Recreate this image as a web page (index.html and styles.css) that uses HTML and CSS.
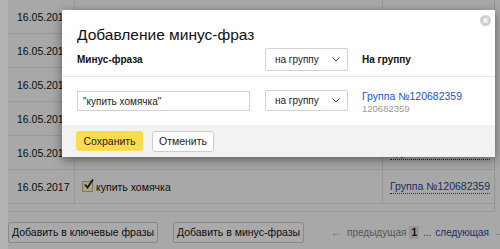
FILE: index.html
```html
<!DOCTYPE html>
<html lang="ru">
<head>
<meta charset="utf-8">
<link rel="stylesheet" href="styles.css">
</head>
<body>
<div class="page">
  <div class="table">
    <div class="row"><div class="c c-date">16.05.2017</div><div class="c c-phrase"></div><div class="c c-group"></div></div>
    <div class="row"><div class="c c-date">16.05.2017</div><div class="c c-phrase"></div><div class="c c-group"></div></div>
    <div class="row"><div class="c c-date">16.05.2017</div><div class="c c-phrase"></div><div class="c c-group"></div></div>
    <div class="row"><div class="c c-date">16.05.2017</div><div class="c c-phrase"></div><div class="c c-group"></div></div>
    <div class="row"><div class="c c-date">16.05.2017</div><div class="c c-phrase"></div><div class="c c-group"><a class="dlink">Группа №120682359</a></div></div>
    <div class="row"><div class="c c-date">16.05.2017</div><div class="c c-phrase"><span class="cb"><svg width="11" height="11" viewBox="0 0 11 11"><path d="M2 5.5 L4.5 8.5 L10 0.5" fill="none" stroke="#222" stroke-width="1.8"/></svg></span>купить хомячка</div><div class="c c-group"><a class="dlink">Группа №120682359</a></div></div>
    <div class="row row-empty"></div>
  </div>
  <div class="actions">
    <button class="btn">Добавить в ключевые фразы</button>
    <button class="btn btn-minus">Добавить в минус-фразы</button>
    <div class="pager">
      <span class="pg-muted">←</span>
      <span class="pg-muted">предыдущая</span>
      <span class="pg-cur">1</span>
      <span class="pg-dots">...</span>
      <a class="pg-next">следующая</a>
      <span class="pg-arrow">→</span>
    </div>
  </div>
</div>
<div class="overlay"></div>
<div class="modal">
  <span class="close"><svg width="11" height="11" viewBox="0 0 11 11"><circle cx="5.5" cy="5.5" r="5.5" fill="#d0d0d0"/><path d="M3.5 3.5 L7.5 7.5 M7.5 3.5 L3.5 7.5" stroke="#fff" stroke-width="1.4"/></svg></span>
  <div class="m-title">Добавление минус-фраз</div>
  <div class="m-row m-head">
    <div class="col1 lbl">Минус-фраза</div>
    <div class="col2"><div class="sel">на группу<svg class="chev" width="8" height="5" viewBox="0 0 8 5"><path d="M0.5 0.5 L4 4 L7.5 0.5" fill="none" stroke="#444" stroke-width="1"/></svg></div></div>
    <div class="col3 lbl">На группу</div>
  </div>
  <div class="m-row m-item">
    <div class="col1"><div class="inp">"купить хомячка"</div></div>
    <div class="col2"><div class="sel">на группу<svg class="chev" width="8" height="5" viewBox="0 0 8 5"><path d="M0.5 0.5 L4 4 L7.5 0.5" fill="none" stroke="#444" stroke-width="1"/></svg></div></div>
    <div class="col3 grp"><a class="glink">Группа №120682359</a><span class="gid">120682359</span></div>
  </div>
  <div class="m-foot">
    <button class="b-save">Сохранить</button>
    <button class="b-cancel">Отменить</button>
  </div>
</div>
</body>
</html>
```
FILE: styles.css
```css
html, body {
  margin: 0;
  padding: 0;
}
body {
  width: 500px;
  height: 249px;
  overflow: hidden;
  background: #fff;
  font-family: "Liberation Sans", Arial, sans-serif;
  font-size: 10.5px;
  color: #111;
  position: relative;
}
.page {
  margin-left: 8px;
  height: 249px;
  background: #f1f1f1;
}
.table {
  width: 487px;
  border-right: 1px solid #d6d6d6;
  box-sizing: border-box;
}
.row {
  display: flex;
  height: 34px;
  border-bottom: 1px solid #dadada;
  box-sizing: border-box;
}
.row-empty {
  height: 8px;
}
.c {
  display: flex;
  align-items: center;
  box-sizing: border-box;
}
.c-date {
  width: 67px;
  padding-left: 9px;
  border-right: 1px solid #dadada;
}
.c-phrase {
  width: 308px;
  padding-left: 7px;
  border-right: 1px solid #dadada;
}
.c-group {
  flex: 1;
  padding-left: 7px;
}
.cb {
  width: 9px;
  height: 9px;
  border: 1px solid #b9b08a;
  background: #f7edb4;
  margin-right: 3px;
  position: relative;
}
.cb svg {
  position: absolute;
  left: 0;
  top: -3px;
}
.dlink {
  color: #27448f;
  border-bottom: 1px dotted #27448f;
  line-height: 13px;
}
.actions {
  display: flex;
  align-items: center;
  height: 37px;
  padding-top: 3px;
  box-sizing: border-box;
  overflow: hidden;
}
.btn {
  flex-shrink: 0;
  height: 21px;
  padding: 0;
  white-space: nowrap;
  font-family: inherit;
  font-size: 10.5px;
  color: #111;
  background: #f4f4f4;
  border: 1px solid #c4c4c4;
  border-radius: 2px;
  width: 150px;
}
.btn-minus {
  margin-left: 15px;
  width: 131px;
}
.pager {
  flex-shrink: 0;
  margin-left: 27px;
  display: flex;
  align-items: center;
  gap: 3px;
  white-space: nowrap;
  font-size: 10px;
}
.pg-muted {
  color: #7b7b7b;
}
.pg-muted + .pg-muted {
  margin-left: 3px;
}
.pg-cur {
  background: #d6d6d6;
  padding: 1px 2px;
  color: #111;
  font-weight: bold;
}
.pg-dots {
  color: #555;
  padding: 0 1px;
}
.pg-next {
  color: #27448f;
}
.pg-arrow {
  color: #27448f;
  margin-left: 2px;
}
.overlay {
  position: absolute;
  inset: 0;
  background: rgba(0, 0, 0, 0.3);
}
.modal {
  position: absolute;
  left: 62px;
  top: 10px;
  width: 433px;
  background: #fff;
  box-shadow: 0 3px 10px rgba(0, 0, 0, 0.45);
}
.close {
  position: absolute;
  left: 418px;
  top: 5px;
  line-height: 0;
}
.m-title {
  padding: 15px 15px 0;
  font-size: 15.5px;
  line-height: 20px;
  color: #111;
}
.m-row {
  display: flex;
  align-items: center;
  padding: 0 15px;
}
.m-head {
  margin-top: 3px;
  height: 23px;
  padding-bottom: 5px;
  border-bottom: 1px solid #e6e6e6;
}
.m-item {
  padding-top: 13px;
  height: 35px;
  align-items: flex-start;
}
.col1 {
  width: 173px;
  margin-right: 15px;
}
.col2 {
  width: 83px;
  margin-right: 14px;
}
.col3 {
  flex: 1;
}
.lbl {
  font-weight: bold;
  font-size: 10px;
}
.sel {
  height: 23px;
  border: 1px solid #d2d2d2;
  border-radius: 2px;
  box-sizing: border-box;
  display: flex;
  align-items: center;
  justify-content: space-between;
  padding: 0 7px 0 9px;
  font-size: 10px;
  color: #222;
}
.m-item .sel {
  height: 21px;
}
.inp {
  height: 20px;
  margin-top: 1px;
  border: 1px solid #d2d2d2;
  box-sizing: border-box;
  display: flex;
  align-items: center;
  padding-left: 5px;
  font-size: 10px;
  color: #222;
}
.grp {
  display: flex;
  flex-direction: column;
}
.glink {
  color: #2457b8;
  font-size: 10.5px;
  line-height: 13px;
}
.gid {
  color: #9a9a9a;
  font-size: 9.5px;
  line-height: 12px;
}
.m-foot {
  background: #f2f2f2;
  height: 32px;
  display: flex;
  align-items: center;
  padding: 0 14px;
  gap: 9px;
  box-sizing: border-box;
}
.b-save {
  height: 20px;
  width: 67px;
  background: #ffdb4d;
  border: none;
  border-radius: 3px;
  font-family: inherit;
  font-size: 10.5px;
  color: #222;
}
.b-cancel {
  height: 21px;
  width: 62px;
  background: #fff;
  border: 1px solid #ccc;
  border-radius: 3px;
  font-family: inherit;
  font-size: 10.5px;
  color: #222;
}
```
